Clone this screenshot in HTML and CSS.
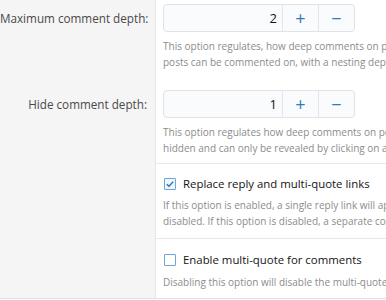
FILE: index.html
```html
<!DOCTYPE html>
<html lang="en">
<head>
    <meta charset="UTF-8">
    <meta name="viewport" content="width=device-width, initial-scale=1.0">
    <title>Comment options</title>
    <link rel="stylesheet" href="styles.css">
</head>
<body>
    <div class="form-block">
        <div class="form-row row-first">
            <div class="row-label">Maximum comment depth:</div>
            <div class="row-input">
                <div class="input-group">
                    <input class="num-input" type="text" value="2">
                    <button class="step">+</button>
                    <button class="step">&minus;</button>
                </div>
                <div class="explain">This option regulates, how deep comments on profile posts can be nested. A value of 1 means that only profile<br>posts can be commented on, with a nesting depth of 2 comments can also be replied to.</div>
            </div>
        </div>

        <div class="form-row row-second">
            <div class="row-label">Hide comment depth:</div>
            <div class="row-input">
                <div class="input-group">
                    <input class="num-input" type="text" value="1">
                    <button class="step">+</button>
                    <button class="step">&minus;</button>
                </div>
                <div class="explain">This option regulates how deep comments on posts are shown by default. Comments below this depth are<br>hidden and can only be revealed by clicking on a link below the parent comment.</div>
            </div>
        </div>

        <div class="form-row row-check">
            <div class="row-label"></div>
            <div class="row-input">
                <label class="check">
                    <span class="box checked">
                        <svg width="10" height="10" viewBox="0 0 10 10"><path d="M1.8 5.2 L4 7.3 L8.3 2.6" fill="none" stroke="#2577b1" stroke-width="1.4"/></svg>
                    </span>
                    Replace reply and multi-quote links
                </label>
                <div class="explain">If this option is enabled, a single reply link will appear that combines both functions. The multi-quote is<br>disabled. If this option is disabled, a separate comment link will be shown next to the multi-quote link.</div>
            </div>
        </div>

        <div class="form-row row-check row-last">
            <div class="row-label"></div>
            <div class="row-input">
                <label class="check">
                    <span class="box"></span>
                    Enable multi-quote for comments
                </label>
                <div class="explain">Disabling this option will disable the multi-quote functionality for comments only.</div>
            </div>
        </div>
    </div>
</body>
</html>
```

FILE: styles.css
```css
html, body {
    margin: 0;
    padding: 0;
    overflow: hidden;
}
body {
    font-family: 'Open Sans', 'Noto Sans', sans-serif;
    font-size: 11.7px;
    color: #141414;
    background-color: #fff;
}
.form-block {
    width: 900px;
    border-bottom: 1px solid #e0e0e0;
    background: linear-gradient(to right, #f5f5f5 155px, #e5e5e5 155px, #e5e5e5 156px, #fff 156px);
}
.form-row {
    display: grid;
    grid-template-columns: 156px 1fr;
}
.row-label {
    text-align: right;
    padding: 9px 9px 0 0;
    color: #4a4a4a;
    line-height: 18px;
    white-space: nowrap;
}
.row-input {
    padding: 4px 0 0 7px;
}
.row-first .row-input {
    padding-bottom: 14px;
}
.row-second .row-input {
    padding-top: 6px;
    padding-bottom: 7px;
}
.row-second .row-label {
    padding-top: 11px;
}
.row-check .row-input {
    border-top: 1px solid #e8e8e8;
    padding-top: 12px;
    padding-bottom: 9px;
}
.row-last .row-input {
    padding-top: 13px;
    padding-bottom: 8px;
}
.input-group {
    display: flex;
    width: 192px;
    height: 28px;
    border: 1px solid #dfe3e8;
    border-radius: 4px;
    box-sizing: border-box;
    background-color: #f9fbfd;
    overflow: hidden;
}
.num-input {
    flex: 1;
    min-width: 0;
    border: none;
    background: transparent;
    text-align: right;
    font-family: inherit;
    font-size: 13px;
    color: #141414;
    padding: 0 5px 0 0;
    outline: none;
}
.step {
    width: 36px;
    border: none;
    border-left: 1px solid #e3e7ec;
    background: transparent;
    color: #2f7bbf;
    font-family: inherit;
    font-size: 18px;
    padding: 0;
    line-height: 1;
}
.explain {
    margin-top: 6px;
    font-size: 10px;
    line-height: 16px;
    color: #8c8c8c;
    white-space: nowrap;
}
.check {
    display: flex;
    align-items: center;
    gap: 7px;
    line-height: 16px;
    padding-left: 1px;
    font-size: 11.4px;
}
.box {
    width: 12px;
    height: 12px;
    box-sizing: border-box;
    border: 1px solid #6fa6d8;
    border-radius: 1px;
    background-color: #fff;
    display: flex;
    align-items: center;
    justify-content: center;
}
.box.checked {
    background-color: #eef5fc;
}
.row-check .explain {
    margin-top: 5px;
}
.row-last .explain {
    margin-top: 6px;
}
```
